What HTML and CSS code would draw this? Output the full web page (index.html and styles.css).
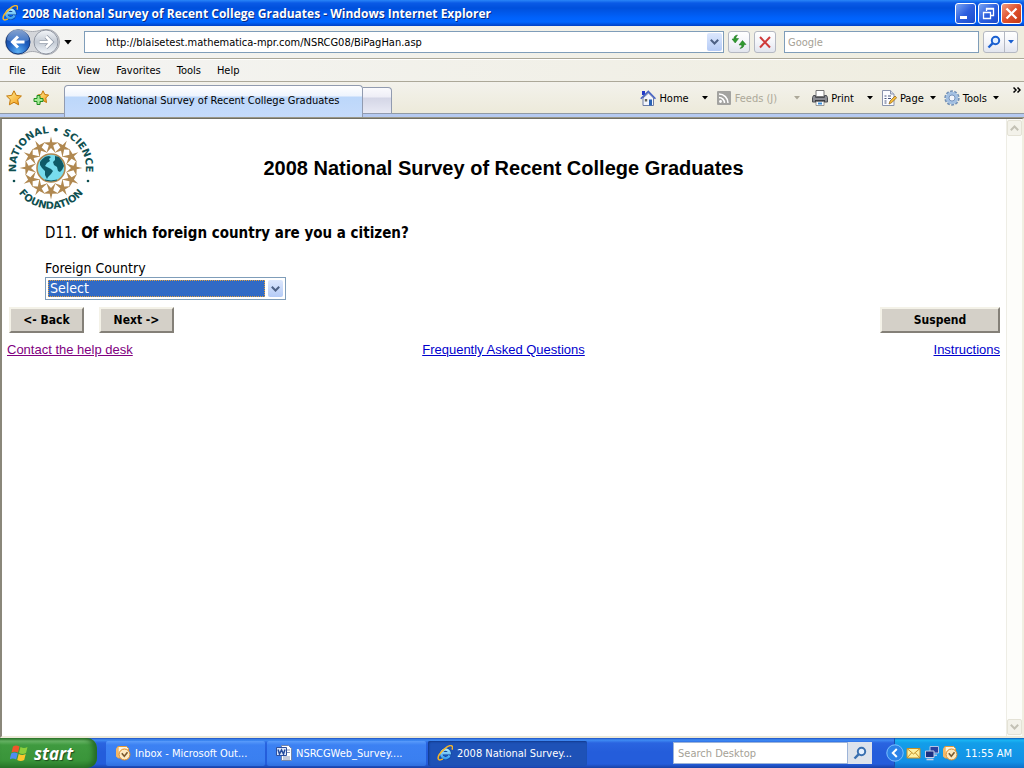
FILE: index.html
```html
<!DOCTYPE html>
<html lang="en">
<head>
    <meta charset="UTF-8">
    <meta name="viewport" content="width=device-width, initial-scale=1.0">
    <title>2008 National Survey of Recent College Graduates</title>
    <link rel="stylesheet" href="styles.css">
</head>
<body>
    <!-- shared icons -->
    <svg class="defs" aria-hidden="true">
        <defs>
            <linearGradient id="ieBlue" x1="0" y1="0" x2="0" y2="1">
                <stop offset="0" stop-color="#a4e6ff"/>
                <stop offset="1" stop-color="#3ba0ee"/>
            </linearGradient>
            <radialGradient id="backBlue" cx="0.5" cy="0.9" r="0.9">
                <stop offset="0" stop-color="#5cb0f4"/>
                <stop offset="0.5" stop-color="#1f5fc0"/>
                <stop offset="1" stop-color="#123a86"/>
            </radialGradient>
            <linearGradient id="backShine" x1="0" y1="0" x2="0" y2="1">
                <stop offset="0" stop-color="#c4d9f4"/>
                <stop offset="1" stop-color="#4f83cf"/>
            </linearGradient>
            <linearGradient id="fwdGray" x1="0" y1="0" x2="0" y2="1">
                <stop offset="0" stop-color="#f4f6f9"/>
                <stop offset="0.5" stop-color="#c3cad4"/>
                <stop offset="1" stop-color="#f2f6fb"/>
            </linearGradient>
            <linearGradient id="gold" x1="0" y1="0" x2="1" y2="1">
                <stop offset="0" stop-color="#fff2a0"/>
                <stop offset="1" stop-color="#f59a10"/>
            </linearGradient>
        </defs>
        <symbol id="ie" viewBox="0 0 16 16">
            <path d="M12.500 10.500a4.300 4.300 0 1 1 .3-2.200H5" fill="none" stroke="#0a3f98" stroke-width="3.600"/>
            <path d="M12.500 10.500a4.300 4.300 0 1 1 .3-2.200H5" fill="none" stroke="url(#ieBlue)" stroke-width="2.500"/>
            <path d="M15 4.600c.9-2 .7-3.600-.6-3.900-1.500-.4-4.200.9-6.800 3.200C3.400 7.500.6 11.900 1.300 14c.5 1.400 2.300 1.200 4.600-.1" fill="none" stroke="#f4b52a" stroke-width="1.500"/>
        </symbol>
        <symbol id="outlook" viewBox="0 0 16 16">
            <path d="M3 1.500h8.500l2 2V13H3z" fill="#fff4dc" stroke="#e59a35"/>
            <path d="M1 3.500 3 1.500V13l-2-1.500z" fill="#f6b762"/>
            <circle cx="9.500" cy="9.500" r="5.500" fill="#fde9c0" stroke="#d98520"/>
            <path d="M6.800 8.200 9.300 11.200 12.500 7.200" fill="none" stroke="#7a5a30" stroke-width="1.600"/>
        </symbol>
        <symbol id="down" viewBox="0 0 9 6">
            <path d="M.8.8 4.500 4.500 8.200.8" fill="none" stroke="currentColor" stroke-width="2"/>
        </symbol>
        <symbol id="caret" viewBox="0 0 6 4">
            <path d="M0 0h6L3 3.500z" fill="currentColor"/>
        </symbol>
        <symbol id="star" viewBox="0 0 16 16">
            <path d="M8 .8 10.300 5.400 15.400 6 11.700 9.600 12.600 14.800 8 12.300 3.400 14.800 4.300 9.600.6 6 5.700 5.400z" fill="url(#gold)" stroke="#c47808"/>
        </symbol>
        <symbol id="lens" viewBox="0 0 14 14">
            <circle cx="8.500" cy="5.500" r="3.700" fill="#e4f0ff" stroke="currentColor" stroke-width="2"/>
            <path d="M5.800 8.200 1.500 12.500" stroke="currentColor" stroke-width="2.400"/>
        </symbol>
    </svg>

    <header class="titlebar">
        <svg class="icon16"><use href="#ie"/></svg>
        <span class="window-title">2008 National Survey of Recent College Graduates - Windows Internet Explorer</span>
        <button class="win-btn" aria-label="Minimize"><svg viewBox="0 0 19 19"><path d="M4 12h7v3H4z" fill="#fff"/></svg></button>
        <button class="win-btn" aria-label="Restore"><svg viewBox="0 0 19 19"><path d="M7.500 7V4.500h7v7H12M7 5h8M4.500 8.500h7v6h-7zM4 8.500h8" fill="none" stroke="#fff" stroke-width="1.300"/></svg></button>
        <button class="win-btn close" aria-label="Close"><svg viewBox="0 0 19 19"><path d="M4.500 4.500l10 10m0-10-10 10" stroke="#fff" stroke-width="2.300"/></svg></button>
    </header>

    <div class="address-row">
        <div class="nav">
            <svg class="nav-icons" viewBox="0 0 56 28" role="img" aria-label="Back and forward">
                <path d="M14 1.500c7 0 8 2 14.500 2S36 1.500 43 1.500a12.500 12.500 0 0 1 0 25c-7 0-8-3-14.500-3s-7.500 3-14.500 3a12.500 12.500 0 0 1 0-25z" fill="#d4d6da" stroke="#a6a9b0"/>
                <circle cx="14" cy="14" r="12" fill="url(#backBlue)" stroke="#163b7c"/>
                <path d="M3 12a11 10.500 0 0 1 22 0c-5 3-16 3-22 0z" fill="url(#backShine)" opacity=".65"/>
                <path d="M20.500 14H9M14 8.500 8.500 14 14 19.500" fill="none" stroke="#fff" stroke-width="3"/>
                <circle cx="42" cy="14" r="12" fill="url(#fwdGray)" stroke="#9197a3"/>
                <path d="M35.500 14H47M42 8.500 47.500 14 42 19.500" fill="none" stroke="#8e97a6" stroke-width="4"/>
                <path d="M35.500 14H47M42 8.500 47.500 14 42 19.500" fill="none" stroke="#fff" stroke-width="2.600"/>
            </svg>
            <svg class="caret big"><use href="#caret"/></svg>
        </div>
        <div class="url-box">
            <input type="text" aria-label="Address" value="http://blaisetest.mathematica-mpr.com/NSRCG08/BiPagHan.asp">
            <button class="drop-btn" aria-label="Show addresses"><svg><use href="#down"/></svg></button>
        </div>
        <button class="tool-btn" aria-label="Refresh">
            <svg viewBox="0 0 16 16"><path d="M6.500 1 5 3.200v1.300h2.600L4.200 9 1 5h1.800C2.800 2.800 4 1.300 6.500 1z" fill="#2f9a2f" stroke="#1d701d" stroke-width=".5"/><path d="M9 14.500l1.700-2v-1.500H8L11.500 6.500 15 10.500h-1.900c0 2.200-1.600 3.700-4.100 4z" fill="#2f9a2f" stroke="#1d701d" stroke-width=".5"/></svg>
        </button>
        <button class="tool-btn" aria-label="Stop">
            <svg viewBox="0 0 16 16"><path d="M3 3l10 10.500M13 3 3 13.500" stroke="#cf3a3a" stroke-width="2"/></svg>
        </button>
        <input class="google" type="text" aria-label="Search the web" placeholder="Google">
        <div class="search-split">
            <button aria-label="Search"><svg class="lens"><use href="#lens"/></svg></button>
            <button aria-label="Search options"><svg class="caret"><use href="#caret"/></svg></button>
        </div>
    </div>

    <nav class="menu">
        <a href="#">File</a>
        <a href="#">Edit</a>
        <a href="#">View</a>
        <a href="#">Favorites</a>
        <a href="#">Tools</a>
        <a href="#">Help</a>
    </nav>

    <div class="tab-row">
        <div class="favorites">
            <svg class="icon16"><use href="#star"/></svg>
            <svg class="icon16" viewBox="0 0 16 16">
                <path d="M10 .8 11.800 4.500 15.600 5 12.800 8 13.500 12.500 10 10.500 6.500 12.500 7 8 4.600 5 8.300 4.500z" fill="url(#gold)" stroke="#c47808"/>
                <path d="M4 5.500h3V8.500h3v3H7v3H4v-3H1v-3h3z" fill="#a5ea96" stroke="#1f8f1f"/>
            </svg>
        </div>
        <div class="tab">2008 National Survey of Recent College Graduates</div>
        <button class="new-tab" aria-label="New tab"></button>
        <div class="commands">
            <button class="cmd home">
                <svg viewBox="0 0 16 16"><path d="M2 1h3v4H2z" fill="#2138c8"/><path d="M3 8v7.500h10.500V8L8.500 3z" fill="#f3f5fb" stroke="#6d7da5"/><path d="M.8 8.800 8.300 1.500l7.200 7.300" fill="none" stroke="#4663c4" stroke-width="1.600"/><path d="M9 9.500h3v6H9z" fill="#2a63b5"/><path d="M4.800 9h2.400v2.500H4.800z" fill="#665"/></svg>
                Home
                <svg class="caret"><use href="#caret"/></svg>
            </button>
            <button class="cmd feeds" disabled>
                <svg viewBox="0 0 16 16"><rect x="1" y="1" width="14" height="14" rx="1" fill="#a3a3a0"/><circle cx="4.500" cy="11.500" r="1.400" fill="#fff"/><path d="M3 7.500a5.500 5.500 0 0 1 5.500 5.500M3 4a9 9 0 0 1 9 9" fill="none" stroke="#fff" stroke-width="1.500"/></svg>
                Feeds (J)
                <svg class="caret"><use href="#caret"/></svg>
            </button>
            <button class="cmd print">
                <svg viewBox="0 0 16 16"><path d="M4 .5h8v6H4z" fill="#fff" stroke="#777"/><path d="M1.500 5.500h2v2h9v-2h2l1 2v4.500H.5V7.500z" fill="#8b8d93" stroke="#4a4c52"/><path d="M3 10h10v2H3z" fill="#3a3c42"/><path d="M4 11.500h8v4H4z" fill="#fff" stroke="#777" stroke-width=".7"/><path d="M6 12.500h4v2H6z" fill="#3d8ed6"/></svg>
                Print
                <svg class="caret"><use href="#caret"/></svg>
            </button>
            <button class="cmd page-menu">
                <svg viewBox="0 0 16 16"><path d="M1.500.5h8l3.500 3.500v11.500H1.500z" fill="#fbfcff" stroke="#8a94ad"/><path d="M9.500.5V4H13" fill="#d8deec" stroke="#8a94ad"/><path d="M3.500 6h2M7 6h3M3.500 8.500h2M7 8.500h3M3.500 11h2M3.500 13h2" stroke="#49567c"/><path d="M8 14l1-3 5-5 1.700 1.700-5 5z" fill="#f5bd3a" stroke="#8a5d1a" stroke-width=".7"/></svg>
                Page
                <svg class="caret"><use href="#caret"/></svg>
            </button>
            <button class="cmd tools">
                <svg viewBox="0 0 16 16"><circle cx="8" cy="8" r="6.700" fill="none" stroke="#7390b5" stroke-width="2" stroke-dasharray="2.800 1.400"/><circle cx="8" cy="8" r="4.600" fill="none" stroke="#a3c0e2" stroke-width="3.200"/><circle cx="8" cy="8" r="3" fill="#f3f5fa" stroke="#5f82b0" stroke-width=".8"/></svg>
                Tools
                <svg class="caret"><use href="#caret"/></svg>
            </button>
            <button class="more" aria-label="More commands"><svg viewBox="0 0 8 6"><path d="M.5.5 3 3 .5 5.500M4.500.5 7 3 4.500 5.500" fill="none" stroke="#000" stroke-width="1.500"/></svg></button>
        </div>
    </div>

    <main class="viewport">
        <div class="page">
            <div class="banner">
                <svg class="logo" viewBox="0 0 88 88" role="img" aria-label="National Science Foundation">
                    <defs>
                        <path id="arcTop" d="M11.100 56A35 35 0 1 1 76.900 56"/>
                        <path id="arcBottom" d="M5.500 58A41 41 0 0 0 82.500 58"/>
                        <path id="person" d="M44 12.500 45.300 18.300 51.500 18.600 46.200 21.500 48.600 29 44 24 39.400 29 41.800 21.500 36.500 18.600 42.700 18.300z"/>
                    </defs>
                    <g fill="#b08850">
                        <use href="#person"/>
                        <use href="#person" transform="rotate(30 44 44)"/>
                        <use href="#person" transform="rotate(60 44 44)"/>
                        <use href="#person" transform="rotate(90 44 44)"/>
                        <use href="#person" transform="rotate(120 44 44)"/>
                        <use href="#person" transform="rotate(150 44 44)"/>
                        <use href="#person" transform="rotate(180 44 44)"/>
                        <use href="#person" transform="rotate(210 44 44)"/>
                        <use href="#person" transform="rotate(240 44 44)"/>
                        <use href="#person" transform="rotate(270 44 44)"/>
                        <use href="#person" transform="rotate(300 44 44)"/>
                        <use href="#person" transform="rotate(330 44 44)"/>
                    </g>
                    <circle cx="44" cy="44" r="14" fill="#78dcee" stroke="#b08850" stroke-width="1.600"/>
                    <path d="M33 38c2-3 5-6 9-6l2 1-2 2 1 2-3 2-2 3 2 1 4 2 2 2-2 3-3 3-1 2-2-4 0-4-3-3-2-3zM48 32l4 1 3 4 2 5-2 4-2 2-2-1-1-4-3-2-1-3 2-2z" fill="#0f5a68"/>
                    <path d="M38 56q6 2 12 0" stroke="#0f5a68" fill="none"/>
                    <text class="logo-text"><textPath href="#arcTop" startOffset="50%">NATIONAL • SCIENCE</textPath></text>
                    <text class="logo-text"><textPath href="#arcBottom" startOffset="50%">FOUNDATION</textPath></text>
                    <circle cx="7" cy="57" r="1.300" fill="#0f4f50"/>
                    <circle cx="81" cy="57" r="1.300" fill="#0f4f50"/>
                </svg>
                <h1>2008 National Survey of Recent College Graduates</h1>
            </div>
            <form class="question">
                <p>D11. <b>Of which foreign country are you a citizen?</b></p>
                <label for="country">Foreign Country</label>
                <div class="combo">
                    <select id="country">
                        <option>Select</option>
                    </select>
                    <span class="drop-btn"><svg><use href="#down"/></svg></span>
                </div>
            </form>
            <div class="actions">
                <button class="btn">&lt;- Back</button>
                <button class="btn">Next -&gt;</button>
                <button class="btn suspend">Suspend</button>
            </div>
            <div class="links">
                <a class="visited" href="#">Contact the help desk</a>
                <a href="#">Frequently Asked Questions</a>
                <a href="#">Instructions</a>
            </div>
        </div>
        <div class="scrollbar">
            <span class="scroll-btn up"><svg><use href="#down"/></svg></span>
            <span class="scroll-btn"><svg><use href="#down"/></svg></span>
        </div>
    </main>

    <footer class="taskbar">
        <button class="start">
            <svg viewBox="0 0 20 18">
                <path d="M3 2.500c2-1.300 4-1.300 6.500 0L8 8.500c-2.500-1-4.500-1-6.500 0z" fill="#f0562a"/>
                <path d="M10.500 3c2.500 1.300 4.500 1.300 7 0L16 9c-2.500 1.300-4.500 1.300-7 0z" fill="#8ccf3c"/>
                <path d="M1.200 9.500c2-1.200 4-1.200 6.500 0l-1.500 6c-2.500-1.200-4.500-1.200-6.500 0z" fill="#4f8cf0"/>
                <path d="M8.700 10c2.500 1.300 4.500 1.300 7 0l-1.500 6c-2.500 1.300-4.500 1.300-7 0z" fill="#fbc62c"/>
            </svg>
            start
        </button>
        <div class="tasks">
            <button class="task"><svg class="icon16"><use href="#outlook"/></svg><span>Inbox - Microsoft Out...</span></button>
            <button class="task">
                <svg class="icon16" viewBox="0 0 16 16"><path d="M5.500.5h7l3 3v12h-10z" fill="#fff" stroke="#7384a8"/><path d="M11 5h3M11 7.500h3M7 12h7M7 14h7" stroke="#8796b8"/><path d="M.5 2.500h10v8H.5z" fill="#dce7fb" stroke="#2c4f9e"/><path d="M2 4.500l1.500 4.500 2-4 2 4L9 4.500" fill="none" stroke="#234a9c" stroke-width="1.500"/></svg>
                <span>NSRCGWeb_Survey....</span>
            </button>
            <button class="task active"><svg class="icon16"><use href="#ie"/></svg><span>2008 National Survey...</span></button>
        </div>
        <div class="desk-search">
            <input type="text" aria-label="Search Desktop" placeholder="Search Desktop">
            <button aria-label="Search"><svg class="lens"><use href="#lens"/></svg></button>
        </div>
        <div class="tray">
            <button class="tray-toggle" aria-label="Show hidden icons"><svg viewBox="0 0 18 18"><circle cx="9" cy="9" r="8.200" fill="#2b83e8" stroke="#7cc0ff"/><path d="M10.800 5 6.800 9l4 4" fill="none" stroke="#fff" stroke-width="2"/></svg></button>
            <svg viewBox="0 0 16 16"><path d="M1 3.500h13v9.500H1z" fill="#fff0a0" stroke="#c58f25"/><path d="M1 3.500 7.500 9 14 3.500M1 13l4.500-5M14 13 9.500 8" fill="none" stroke="#c58f25"/></svg>
            <svg viewBox="0 0 16 16"><path d="M6 1.500h8.500V8H6z" fill="#2842a0" stroke="#b6c4e4"/><path d="M8 9.500h5v1.500H8z" fill="#b6c4e4"/><path d="M1.500 6h8.500v6.500H1.500z" fill="#1a2f80" stroke="#c4cfe8"/><path d="M2.500 14.500h7" stroke="#c4cfe8" stroke-width="1.600"/></svg>
            <svg viewBox="0 0 16 16"><use href="#outlook"/></svg>
            <span class="clock">11:55 AM</span>
        </div>
    </footer>
</body>
</html>
```
FILE: styles.css
```css
* {
    box-sizing: border-box;
}
body {
    margin: 0;
    min-height: 100vh;
    display: flex;
    flex-direction: column;
    font-family: "DejaVu Sans Condensed", "DejaVu Sans", sans-serif;
    font-size: 11px;
    background: #fff;
    color: #000;
}
button, input, select {
    font: inherit;
    color: inherit;
    margin: 0;
    padding: 0;
    border: 0;
    border-radius: 0;
    background: none;
}
svg {
    display: block;
    flex: none;
}
.defs {
    position: absolute;
    width: 0;
    height: 0;
}
.icon16 {
    width: 16px;
    height: 16px;
}
.caret {
    width: 6px;
    height: 4px;
}
.caret.big {
    width: 8px;
    height: 5px;
}
.lens {
    width: 14px;
    height: 14px;
}

/* title bar */
.titlebar {
    display: flex;
    align-items: center;
    gap: 2px;
    height: 26px;
    padding: 0 2px;
    background: linear-gradient(#2a86f8 0, #0a5ae6 3px, #0050dc 8px, #0062fc 18px, #0066ff 22px, #0040c4 26px);
}
.window-title {
    flex: 1;
    padding-left: 2px;
    color: #fff;
    font-family: "Open Sans", sans-serif;
    font-weight: bold;
    font-size: 12px;
    text-shadow: 1px 1px #0a2a80;
    white-space: nowrap;
}
.win-btn {
    width: 21px;
    height: 21px;
    border: 1px solid #fff;
    border-radius: 3px;
    background: linear-gradient(135deg, #7ba5f3, #2c5fdf 50%, #1a4bcc);
}
.win-btn.close {
    background: linear-gradient(135deg, #f09c80, #e0502c 50%, #c23a14);
}

/* address row */
.address-row {
    display: flex;
    align-items: center;
    height: 33px;
    padding: 0 6px 0 4px;
    background: linear-gradient(90deg, #f4f4f3, #efeddf);
    border-bottom: 1px solid #aca899;
}
.nav {
    display: flex;
    align-items: center;
    gap: 4px;
    width: 80px;
}
.nav-icons {
    width: 56px;
    height: 28px;
}
.url-box {
    flex: 1;
    display: flex;
    height: 22px;
    padding: 1px;
    border: 1px solid #7f9db9;
    background: #fff;
}
.url-box input {
    flex: 1;
    padding-left: 20px;
}
.drop-btn {
    display: flex;
    align-items: center;
    justify-content: center;
    width: 15px;
    border-radius: 2px;
    background: linear-gradient(#dce7fd, #b5cbf6);
    color: #4d6185;
}
.drop-btn svg {
    width: 9px;
    height: 6px;
}
.tool-btn {
    display: flex;
    align-items: center;
    justify-content: center;
    width: 22px;
    height: 22px;
    margin-left: 4px;
    border: 1px solid #b4b8c2;
    border-radius: 3px;
    background: linear-gradient(#fff, #f4f5fa 50%, #e2e5ee);
}
.tool-btn svg {
    width: 16px;
    height: 16px;
}
.google {
    width: 195px;
    height: 22px;
    margin-left: 8px;
    padding: 0 3px;
    border: 1px solid #7f9db9;
    background: #fff;
}
::placeholder {
    color: #a5a196;
    opacity: 1;
}
.search-split {
    display: flex;
    height: 22px;
    margin-left: 4px;
    border: 1px solid #b4b8c2;
    border-radius: 3px;
    background: linear-gradient(#fff, #f4f5fa 50%, #e2e5ee);
    color: #1a5fd0;
}
.search-split button {
    display: flex;
    align-items: center;
    justify-content: center;
    width: 20px;
}
.search-split button + button {
    width: 13px;
    border-left: 1px solid #b4b8c2;
}

/* menu */
.menu {
    display: flex;
    align-items: center;
    gap: 16px;
    height: 23px;
    padding: 0 9px;
    background: linear-gradient(90deg, #f4f4f3, #efeddf);
    border-top: 1px solid #fff;
    border-bottom: 1px solid #aca899;
}
.menu a {
    color: #000;
    text-decoration: none;
}

/* tabs and command bar */
.tab-row {
    display: flex;
    align-items: flex-end;
    height: 36px;
    padding-right: 3px;
    background: linear-gradient(#b5c9f0, #b5c9f0) bottom / 100% 3px no-repeat, linear-gradient(#919aa4, #919aa4) 0 31px / 100% 1px no-repeat, linear-gradient(#f3f2ec, #ece9d8);
    border-bottom: 1px solid #9a9787;
}
.favorites {
    display: flex;
    align-items: center;
    gap: 11px;
    width: 64px;
    height: 32px;
    margin-bottom: 3px;
    padding-left: 6px;
}
.tab {
    display: flex;
    align-items: center;
    justify-content: center;
    width: 299px;
    height: 32px;
    padding-bottom: 3px;
    border: 1px solid #919bb0;
    border-bottom: 0;
    border-radius: 4px 4px 0 0;
    background: linear-gradient(#fff, #eef4fd 10px, #bcd7fa 11px, #c6dbfb);
    white-space: nowrap;
}
.new-tab {
    width: 29px;
    height: 27px;
    margin-bottom: 3px;
    border: 1px solid #919bb0;
    border-left: 0;
    border-radius: 0 4px 0 0;
    background: linear-gradient(#fafafd, #eeeef6 9px, #d4d6e6 10px, #e8e9f4);
}
.commands {
    flex: 1;
    display: flex;
    justify-content: flex-end;
    align-items: center;
    height: 32px;
    margin-bottom: 3px;
}
.cmd {
    display: flex;
    align-items: center;
    gap: 3px;
    margin-right: 8px;
    white-space: nowrap;
}
.cmd > svg:first-child {
    width: 16px;
    height: 16px;
}
.home .caret, .print .caret {
    margin-left: 10px;
}
.feeds .caret {
    margin-left: 14px;
}
.page-menu .caret, .tools .caret {
    margin-left: 3px;
}
.feeds {
    margin-right: 12px;
    color: #aca899;
}
.tools {
    margin-right: 14px;
}
.more {
    align-self: flex-start;
    margin-top: 5px;
}
.more svg {
    width: 8px;
    height: 6px;
}

/* page */
.viewport {
    flex: 1;
    display: flex;
    border-top: 1px solid #716f64;
    border-left: 2px solid #8a877a;
    border-right: 2px solid #f1efe2;
    border-bottom: 2px solid #ece9d8;
}
.page {
    flex: 1;
    padding: 5px 6px 5px 5px;
}
.banner {
    display: grid;
    grid-template-columns: 88px 1fr 88px;
    align-items: center;
}
.logo {
    width: 88px;
    height: 88px;
}
.logo-text {
    font-family: "DejaVu Sans", sans-serif;
    font-weight: bold;
    font-size: 10px;
    fill: #0f4f50;
    text-anchor: middle;
}
h1 {
    margin: 0;
    font-family: "Liberation Sans", Arial, sans-serif;
    font-size: 20px;
    text-align: center;
    white-space: nowrap;
}
.question {
    padding: 12px 38px 0;
    font-size: 15px;
    line-height: 18px;
}
.question p {
    margin: 0 0 18px;
}
.question label {
    display: block;
    font-size: 14px;
    line-height: 17px;
}
.combo {
    display: flex;
    width: 241px;
    height: 23px;
    padding: 2px;
    border: 1px solid #7f9db9;
    background: #fff;
}
.combo select {
    flex: 1;
    appearance: none;
    margin-right: 3px;
    padding-left: 1px;
    border: 1px dotted #e0a040;
    background: #316ac5;
    color: #fff;
    font-size: 14px;
    line-height: 15px;
}
.actions {
    display: flex;
    gap: 15px;
    padding: 7px 0 0 2px;
}
.btn {
    width: 75px;
    height: 26px;
    border: 2px solid;
    border-color: #f4f2e8 #848078 #848078 #f4f2e8;
    background: #d4d0c8;
    font-weight: bold;
    font-size: 12px;
}
.suspend {
    width: 120px;
    margin-left: auto;
}
.links {
    display: grid;
    grid-template-columns: 1fr auto 1fr;
    padding-top: 8px;
    font-family: "Liberation Sans", Arial, sans-serif;
    font-size: 13px;
    line-height: 17px;
}
.links a {
    color: #0000cc;
    justify-self: start;
}
.links a:last-child {
    justify-self: end;
}
.links .visited {
    color: #800080;
}
.scrollbar {
    display: flex;
    flex-direction: column;
    justify-content: space-between;
    width: 16px;
    padding: 1px 0;
    border-left: 1px solid #eeede5;
    background: #fdfdfa;
}
.scroll-btn {
    display: flex;
    align-items: center;
    justify-content: center;
    height: 16px;
    border: 1px solid #e4e2d6;
    border-radius: 2px;
    background: #f3f2ea;
    color: #c3c1b5;
}
.scroll-btn svg {
    width: 9px;
    height: 6px;
}
.scroll-btn.up svg {
    transform: rotate(180deg);
}

/* taskbar */
.taskbar {
    display: flex;
    align-items: center;
    height: 30px;
    background: linear-gradient(#1f4fc0, #3f8cf4 2px, #2a64e0 5px, #245ddb 14px, #245ddb 26px, #1941a5);
    color: #fff;
}
.start {
    display: flex;
    align-items: center;
    gap: 4px;
    width: 97px;
    height: 30px;
    padding-left: 10px;
    border-radius: 0 10px 10px 0;
    background: linear-gradient(#2c7a2c, #6ab868 3px, #3f9a3f 7px, #3a953a 22px, #2a7a2a);
    box-shadow: inset -4px 0 5px #256b25;
    font-family: "Open Sans", sans-serif;
    font-style: italic;
    font-weight: bold;
    font-size: 17px;
    text-shadow: 1px 1px 1px #1c4a1c;
}
.start svg {
    width: 20px;
    height: 18px;
}
.tasks {
    flex: 1;
    display: flex;
    gap: 2px;
    padding-left: 9px;
}
.task {
    display: flex;
    align-items: center;
    gap: 4px;
    width: 159px;
    height: 25px;
    padding: 0 9px;
    border-radius: 2px;
    background: linear-gradient(#5a9cfb, #3c81f3 4px, #3a7ff0 20px, #3070e0);
    white-space: nowrap;
}
.task.active {
    background: #1e52b7;
    box-shadow: inset 1px 1px 2px #123a8c;
}
.desk-search {
    display: flex;
    height: 22px;
}
.desk-search input {
    width: 175px;
    padding: 0 4px;
    border: 1px solid #9db4d8;
    background: #fff;
    color: #000;
}
.desk-search button {
    display: flex;
    align-items: center;
    justify-content: center;
    width: 24px;
    background: #dde3ec;
    color: #3a70b0;
}
.tray {
    display: flex;
    align-items: center;
    gap: 2px;
    height: 30px;
    margin-left: 22px;
    padding-right: 12px;
    background: linear-gradient(#0c59b9, #1ab6f4 2px, #139ee9 5px, #1290e6 24px, #0f6fc8);
    border-left: 1px solid #1a4fae;
}
.tray svg {
    width: 16px;
    height: 16px;
}
.tray .tray-toggle {
    margin-left: -9px;
}
.tray-toggle svg {
    width: 18px;
    height: 18px;
}
.clock {
    padding-left: 5px;
    white-space: nowrap;
}
```
